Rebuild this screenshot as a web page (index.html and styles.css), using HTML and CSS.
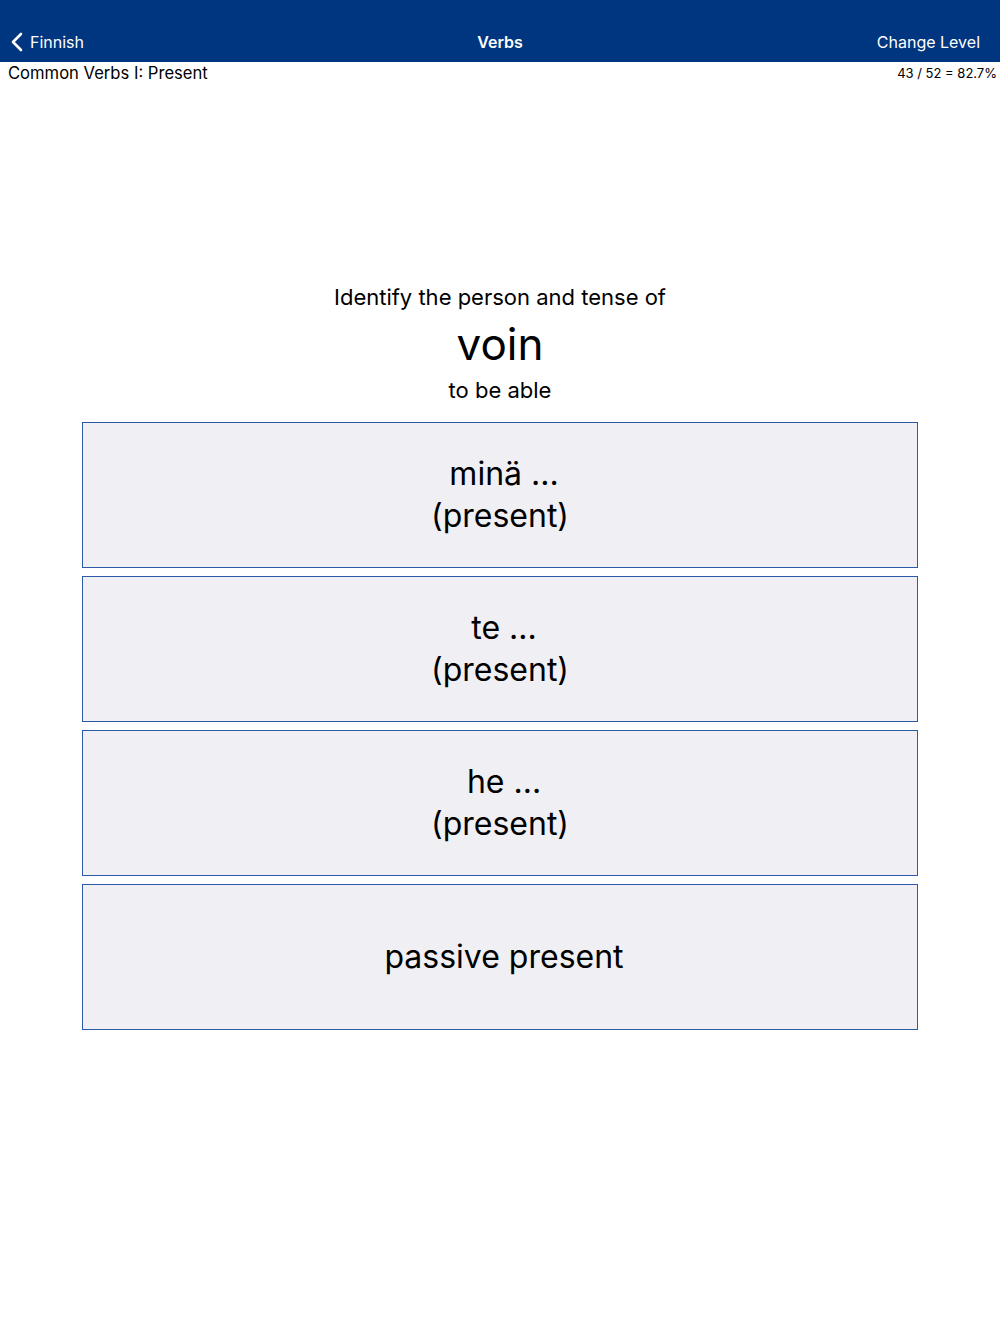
FILE: index.html
```html
<!DOCTYPE html>
<html lang="en">
<head>
    <meta charset="UTF-8">
    <meta name="viewport" content="width=device-width, initial-scale=1.0">
    <title>Verbs</title>
    <link rel="stylesheet" href="styles.css">
</head>
<body>
    <div class="navbar">
        <div class="nav-back">
            <svg width="14" height="20" viewBox="0 0 14 20">
                <path d="M11 2 L3 10 L11 18" fill="none" stroke="#fff" stroke-width="2.6" stroke-linecap="round" stroke-linejoin="round"/>
            </svg>
            <span>Finnish</span>
        </div>
        <div class="nav-title">Verbs</div>
        <div class="nav-right">Change Level</div>
    </div>

    <div class="info-row">
        <span class="lesson">Common Verbs I: Present</span>
        <span class="score">43 / 52 = 82.7%</span>
    </div>

    <div class="question">
        <p class="prompt">Identify the person and tense of</p>
        <p class="word">voin</p>
        <p class="meaning">to be able</p>
    </div>

    <div class="answers">
        <button class="answer"><span class="line shift">minä ...</span><span class="line">(present)</span></button>
        <button class="answer"><span class="line shift">te ...</span><span class="line">(present)</span></button>
        <button class="answer"><span class="line shift">he ...</span><span class="line">(present)</span></button>
        <button class="answer"><span class="line shift">passive present</span></button>
    </div>
</body>
</html>
```

FILE: styles.css
```css
body {
    margin: 0;
    font-family: Inter, "Noto Sans", sans-serif;
    background-color: #fff;
    color: #000;
}

.navbar {
    height: 62px;
    background-color: #00357f;
    color: #fff;
    display: flex;
    align-items: center;
    justify-content: space-between;
    padding: 21px 20px 0 10px;
    box-sizing: border-box;
    position: relative;
    font-size: 16px;
}

.nav-back {
    display: flex;
    align-items: center;
    gap: 6px;
}

.nav-title {
    position: absolute;
    left: 0;
    right: 0;
    top: 21px;
    bottom: 0;
    display: flex;
    align-items: center;
    justify-content: center;
    font-weight: 600;
    pointer-events: none;
}

.info-row {
    display: flex;
    justify-content: space-between;
    align-items: center;
    padding: 0 3px 0 8px;
    height: 22px;
}

.lesson {
    font-size: 16.6px;
}

.score {
    font-size: 13px;
}

.question {
    margin-top: 200px;
    text-align: center;
}

.question p {
    margin: 0;
}

.prompt {
    font-size: 22px;
    line-height: 26px;
}

.word {
    font-size: 44px;
    line-height: 52px;
    margin-top: 8px !important;
}

.meaning {
    font-size: 22px;
    line-height: 26px;
    margin-top: 7px !important;
}

.answers {
    margin: 19px 82px 0;
    display: flex;
    flex-direction: column;
    gap: 8px;
}

.answer {
    height: 146px;
    box-sizing: border-box;
    background-color: #efeff4;
    border: 1.5px solid #2c5ca8;
    font-family: inherit;
    font-size: 32px;
    line-height: 42px;
    color: #000;
    display: flex;
    flex-direction: column;
    align-items: center;
    justify-content: center;
    padding: 0;
}

.shift {
    padding-left: 8px;
}
```
